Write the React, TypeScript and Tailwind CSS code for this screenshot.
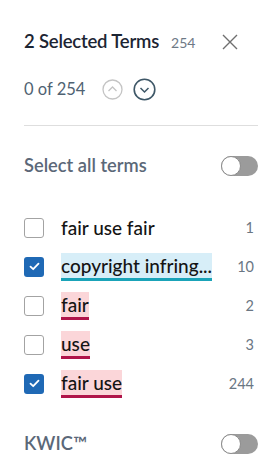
import React from "react";

type Term = {
  label: string;
  count: number;
  checked: boolean;
  tone?: "blue" | "pink";
};

const terms: Term[] = [
  { label: "fair use fair", count: 1, checked: false },
  { label: "copyright infring...", count: 10, checked: true, tone: "blue" },
  { label: "fair", count: 2, checked: false, tone: "pink" },
  { label: "use", count: 3, checked: false, tone: "pink" },
  { label: "fair use", count: 244, checked: true, tone: "pink" },
];

const Toggle = () => (
  <div className="relative w-[37px] h-[20px] rounded-full bg-[#9b9b9b]">
    <div className="absolute left-0 top-0 w-[20px] h-[20px] rounded-full bg-white border border-[#8c8c8c]" />
  </div>
);

const Checkbox = ({ checked }: { checked: boolean }) =>
  checked ? (
    <div className="w-[20px] h-[20px] rounded-[3px] bg-[#1f69b5] flex items-center justify-center">
      <svg width="11" height="9" viewBox="0 0 11 9" fill="none">
        <path d="M1.5 4.6 L4.2 7.2 L9.5 1.6" stroke="white" strokeWidth="1.8" strokeLinecap="round" strokeLinejoin="round" />
      </svg>
    </div>
  ) : (
    <div className="w-[20px] h-[20px] rounded-[3px] border-[1.5px] border-[#a3a3a3] bg-white" />
  );

const App = () => {
  return (
    <div className="w-[278px] h-[474px] bg-white pl-6 pr-5 pt-[29px] font-['Lato','Noto_Sans',sans-serif]">
      {/* header */}
      <div className="flex items-center h-[26px]">
        <span className="text-[18.5px] font-semibold text-[#1c2533] tracking-[-0.2px]">2 Selected Terms</span>
        <span className="ml-[12px] text-[14px] text-[#6d7986]">254</span>
        <svg className="ml-auto mr-[20px]" width="16" height="16" viewBox="0 0 16 16">
          <path d="M1 1 L15 15 M15 1 L1 15" stroke="#6f6f6f" strokeWidth="1.4" />
        </svg>
      </div>

      <div className="flex items-center h-[26px] mt-[21px]">
        <span className="text-[16.5px] text-[#4f6272]">0 of 254</span>
        <svg className="ml-[17px]" width="21" height="21" viewBox="0 0 21 21" fill="none">
          <circle cx="10.5" cy="10.5" r="9.5" stroke="#c4c4c4" strokeWidth="1.3" />
          <path d="M6.5 12 L10.5 8 L14.5 12" stroke="#c4c4c4" strokeWidth="1.3" />
        </svg>
        <svg className="ml-[10px]" width="23" height="23" viewBox="0 0 23 23" fill="none">
          <circle cx="11.5" cy="11.5" r="10.3" stroke="#3e5767" strokeWidth="1.6" />
          <path d="M7.5 10 L11.5 14 L15.5 10" stroke="#3e5767" strokeWidth="1.5" />
        </svg>
      </div>

      <div className="mt-[23px] border-t border-[#dedede]" />

      <div className="flex items-center justify-between h-[26px] mt-[27px]">
        <span className="text-[18.3px] font-semibold text-[#5b6878]">Select all terms</span>
        <Toggle />
      </div>

      <div className="mt-[29px] flex flex-col">
        {terms.map((t) => (
          <div key={t.label} className="flex items-center h-[39px]">
            <Checkbox checked={t.checked} />
            <span
              className={
                "ml-[17px] text-[19px] font-medium text-[#141414] leading-[25px] " +
                (t.tone === "blue"
                  ? "bg-[#d7eef8] border-b-[3px] border-[#1aa3b8]"
                  : t.tone === "pink"
                  ? "bg-[#fbd6d9] border-b-[3px] border-[#b0154a]"
                  : "")
              }
            >
              {t.label}
            </span>
            <span className="ml-auto mr-[4px] text-[14.5px] text-[#6a7683]">{t.count}</span>
          </div>
        ))}
      </div>

      <div className="flex items-center justify-between h-[26px] mt-[28px]">
        <span className="text-[18.3px] font-semibold text-[#5b6878]">KWIC™</span>
        <Toggle />
      </div>
    </div>
  );
};

export default App;
